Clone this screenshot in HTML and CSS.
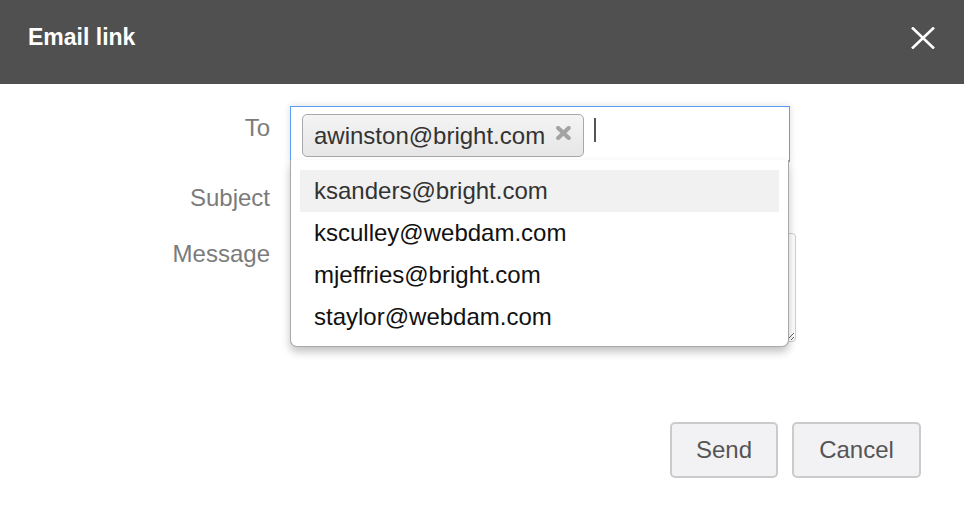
FILE: index.html
```html
<!DOCTYPE html>
<html>
<head>
<meta charset="utf-8">
<link rel="stylesheet" href="styles.css">
</head>
<body>
<div class="dialog">
  <header class="header">
    <h1 class="title">Email link</h1>
    <button class="close" aria-label="Close">
      <svg width="24" height="22" viewBox="0 0 24 22"><path d="M1 0.5 L23 21.5 M23 0.5 L1 21.5" stroke="#fff" stroke-width="2.6" fill="none"/></svg>
    </button>
  </header>
  <form class="form">
    <div class="row row-to">
      <label class="label">To</label>
      <div class="field">
        <div class="to-input">
          <span class="chip">awinston@bright.com
            <svg class="chip-x" width="15" height="14" viewBox="0 0 15 14"><path d="M2.2 2 L12.8 12 M12.8 2 L2.2 12" stroke="#a3a3a3" stroke-width="4.2" stroke-linecap="round" fill="none"/></svg>
          </span>
          <span class="caret"></span>
        </div>
        <ul class="dropdown">
          <li class="option active">ksanders@bright.com</li>
          <li class="option">ksculley@webdam.com</li>
          <li class="option">mjeffries@bright.com</li>
          <li class="option">staylor@webdam.com</li>
        </ul>
      </div>
    </div>
    <div class="row row-subject">
      <label class="label">Subject</label>
      <div class="field"><input class="text-input" type="text"></div>
    </div>
    <div class="row row-message">
      <label class="label">Message</label>
      <div class="field"><textarea class="textarea"></textarea></div>
    </div>
  </form>
  <div class="actions">
    <button class="btn btn-send">Send</button>
    <button class="btn btn-cancel">Cancel</button>
  </div>
</div>
</body>
</html>
```

FILE: styles.css
```css
* { box-sizing: border-box; }
html, body { margin: 0; padding: 0; background: #fff; }
body { font-family: "Liberation Sans", Arial, sans-serif; width: 964px; height: 518px; overflow: hidden; }

.header {
  height: 84px;
  background: #505050;
  display: flex;
  align-items: center;
  justify-content: space-between;
  padding: 0 28px 9px 28px;
}
.title {
  margin: 0;
  color: #fff;
  font-size: 23px;
  font-weight: bold;
  letter-spacing: 0px;
}
.close {
  background: none;
  border: 0;
  padding: 0;
  margin-right: 1px;
  display: flex;
  cursor: pointer;
}

.form {
  padding-top: 22px;
  display: flex;
  flex-direction: column;
}
.row {
  display: grid;
  grid-template-columns: 270px 506px;
  column-gap: 20px;
}
.label {
  text-align: right;
  color: #7b7b7b;
  font-size: 24px;
  line-height: 28px;
}
.field { position: relative; }

.row-to { height: 54px; }
.row-to .label { padding-top: 8px; }
.row-subject { margin-top: 16px; height: 44px; }
.row-subject .label { padding-top: 8px; }
.row-message { margin-top: 13px; height: 109px; }
.row-message .label { padding-top: 7px; }

.to-input {
  width: 500px;
  height: 56px;
  border: 1px solid #5b9df5;
  border-bottom: 0;
  background: #fff;
  padding: 7px 11px;
  display: flex;
  align-items: flex-start;
  box-shadow: 0 0 7px rgba(0,0,0,0.14);
  position: relative;
  z-index: 2;
}
.chip {
  display: inline-flex;
  align-items: center;
  height: 43px;
  width: 282px;
  padding: 0 12px 0 11px;
  border: 1.5px solid #a8a8a8;
  border-radius: 5px;
  background: linear-gradient(#f4f4f4, #e6e6e6);
  color: #333;
  font-size: 24px;
  gap: 11px;
}
.chip-x { margin-top: -5px; }
.caret {
  width: 2px;
  height: 24px;
  background: #555;
  margin-left: 10px;
  margin-top: 4px;
}

.dropdown {
  position: absolute;
  z-index: 3;
  left: 0;
  top: 54px;
  width: 499px;
  margin: 0;
  list-style: none;
  padding: 10px 9px 8px 9px;
  background: #fff;
  border: 1px solid #a9a9a9;
  border-top: 0;
  border-radius: 0 0 7px 7px;
  box-shadow: 0 5px 9px rgba(0,0,0,0.24);
}
.option {
  height: 42px;
  line-height: 42px;
  padding-left: 14px;
  font-size: 24px;
  color: #111;
}
.option.active { background: #f1f1f1; color: #333; }

.text-input {
  width: 490px;
  height: 44px;
  border: 1px solid #ccc;
  border-radius: 3px;
  font: inherit;
}
.textarea {
  display: block;
  width: 506px;
  height: 109px;
  border: 1.5px solid #cfcfcf;
  border-radius: 4px;
  resize: vertical;
  font: inherit;
}

.actions {
  display: flex;
  justify-content: flex-end;
  gap: 14px;
  padding-right: 43px;
  margin-top: 80px;
}
.btn {
  height: 56px;
  border: 2px solid #cbcbcb;
  border-radius: 5px;
  background: #f2f2f4;
  color: #555;
  font-family: "Liberation Sans", Arial, sans-serif;
  font-size: 24px;
  padding: 0;
}
.btn-send { width: 108px; }
.btn-cancel { width: 129px; }
```
